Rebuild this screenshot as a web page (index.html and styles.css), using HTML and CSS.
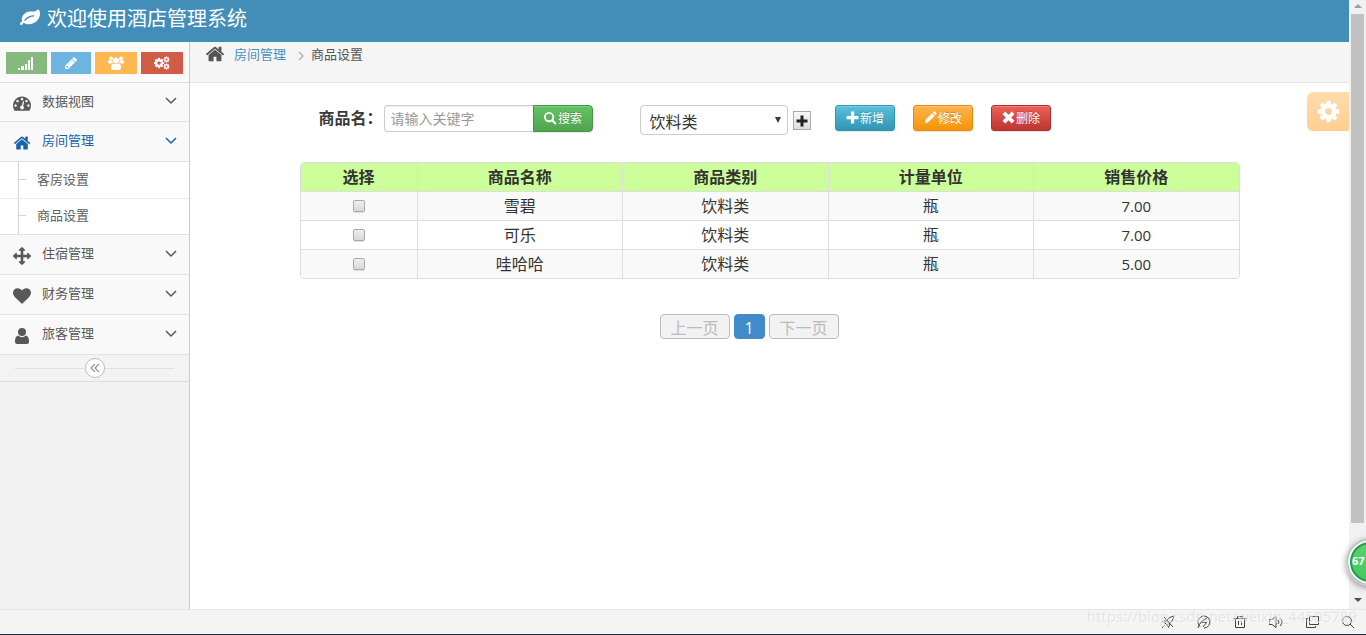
FILE: index.html
```html
<!DOCTYPE html>
<html lang="zh-CN">
<head>
<meta charset="utf-8">
<title>酒店管理系统</title>
<link rel="stylesheet" href="styles.css">
</head>
<body>
<svg class="sprite" aria-hidden="true">
  <symbol id="home" viewBox="0 0 1792 1792"><path d="M1472 992v480q0 26-19 45t-45 19h-384v-384h-256v384h-384q-26 0-45-19t-19-45v-480q0-1 .5-3t.5-3l575-474 575 474q1 2 1 6zm223-69l-62 74q-8 9-21 11h-3q-13 0-21-7l-692-577-692 577q-12 8-24 7-13-2-21-11l-62-74q-8-10-7-23.5t11-21.5l719-599q32-26 76-26t76 26l244 204v-195q0-14 9-23t23-9h192q14 0 23 9t9 23v408l219 182q10 8 11 21.5t-7 23.5z"/></symbol>
  <symbol id="user" viewBox="0 0 18 18"><circle cx="9" cy="5" r="4"/><path d="M5 8.500Q9 12 13 8.500Q16 9.500 16 14V15Q16 17 14 17H4Q2 17 2 15V14Q2 9.500 5 8.500Z"/></symbol>
  <symbol id="heart" viewBox="0 0 1792 1792"><path d="M896 1664q-26 0-44-18l-624-602q-10-8-27.500-26t-55.500-65.500-68-97.500-53.500-121-23.500-138q0-220 127-344t351-124q62 0 126.500 21.500t120 58 95.500 68.500 76 68q36-36 76-68t95.500-68.500 120-58 126.500-21.500q224 0 351 124t127 344q0 221-229 450l-623 600q-18 18-44 18z"/></symbol>
  <symbol id="arrows" viewBox="0 0 1792 1792"><path d="M1792 896q0 26-19 45l-256 256q-19 19-45 19t-45-19-19-45v-128h-384v384h128q26 0 45 19t19 45-19 45l-256 256q-19 19-45 19t-45-19l-256-256q-19-19-19-45t19-45 45-19h128v-384h-384v128q0 26-19 45t-45 19-45-19l-256-256q-19-19-19-45t19-45l256-256q19-19 45-19t45 19 19 45v128h384v-384h-128q-26 0-45-19t-19-45 19-45l256-256q19-19 45-19t45 19l256 256q19 19 19 45t-19 45-45 19h-128v384h384v-128q0-26 19-45t45-19 45 19l256 256q19 19 19 45z"/></symbol>
  <symbol id="gauge" viewBox="0 0 1792 1792"><path d="M384 1152q0-53-37.500-90.500t-90.500-37.500-90.500 37.500-37.500 90.500 37.500 90.500 90.500 37.500 90.500-37.500 37.500-90.500zm192-448q0-53-37.500-90.500t-90.500-37.500-90.500 37.500-37.500 90.500 37.500 90.500 90.500 37.500 90.500-37.500 37.500-90.500zm428 481l101-382q6-26-7.500-48.500t-38.500-29.500-48 6.500-30 39.500l-101 382q-60 5-107 43.500t-63 98.500q-20 77 20 146t117 89 146-20 89-117q16-60-6-117t-72-91zm660-33q0-53-37.500-90.500t-90.500-37.500-90.500 37.500-37.500 90.500 37.500 90.500 90.500 37.500 90.500-37.500 37.500-90.500zm-640-640q0-53-37.500-90.500t-90.500-37.500-90.500 37.500-37.500 90.500 37.500 90.500 90.500 37.500 90.500-37.500 37.500-90.500zm448 192q0-53-37.500-90.500t-90.500-37.500-90.500 37.500-37.500 90.500 37.500 90.500 90.500 37.500 90.500-37.500 37.500-90.500zm320 448q0 261-141 483-19 29-54 29h-1402q-35 0-54-29-141-221-141-483 0-182 71-348t191-286 286-191 348-71 348 71 286 191 191 286 71 348z"/></symbol>
  <symbol id="cog" viewBox="0 0 1792 1792"><path d="M1152 896q0-106-75-181t-181-75-181 75-75 181 75 181 181 75 181-75 75-181zm512-109v222q0 12-8 23t-20 13l-185 28q-19 54-39 91 35 50 107 138 10 12 10 25t-9 23q-27 37-99 108t-94 71q-12 0-26-9l-138-108q-44 23-91 38-16 136-29 186-7 28-36 28h-222q-14 0-24.500-8.500t-11.500-21.500l-28-184q-49-16-90-37l-141 107q-10 9-25 9-14 0-25-11-126-114-165-168-7-10-7-23 0-12 8-23 15-21 51-66.500t54-70.500q-27-50-41-99l-183-27q-13-2-21-12.500t-8-23.500v-222q0-12 8-23t19-13l186-28q14-46 39-92-40-57-107-138-10-12-10-24 0-10 9-23 26-36 98.500-107.500t94.500-71.500q13 0 26 10l138 107q44-23 91-38 16-136 29-186 7-28 36-28h222q14 0 24.500 8.500t11.500 21.500l28 184q49 16 90 37l142-107q9-9 24-9 13 0 25 10 129 119 165 170 7 8 7 22 0 12-8 23-15 21-51 66.500t-54 70.500q26 50 41 98l183 28q13 2 21 12.500t8 23.500z"/></symbol>
  <symbol id="pencil" viewBox="0 0 1792 1792"><path d="M491 1536l91-91-235-235-91 91v107h128v128h107zm523-928q0-22-22-22-10 0-17 7l-542 542q-7 7-7 17 0 22 22 22 10 0 17-7l542-542q7-7 7-17zm-54-192l416 416-832 832h-416v-416zm683 96q0 53-37 90l-166 166-416-416 166-165q36-38 90-38 53 0 91 38l235 234q37 39 37 91z"/></symbol>
  <symbol id="leaf" viewBox="0 0 1792 1792"><path d="M1280 704q0-26-19-45t-45-19q-172 0-318 49.500t-259.500 134-235.500 219.500q-19 21-19 45 0 26 19 45t45 19q24 0 45-19 27-24 74-71t67-66q137-124 268.500-176t313.500-52q26 0 45-19t19-45zm512-198q0 95-20 193-46 224-184.500 383t-357.500 268q-214 108-438 108-148 0-286-47-15-5-88-42t-96-37q-16 0-39.500 32t-45 70-52.500 70-60 32q-43 0-63.500-17.500t-45.500-59.500q-2-4-6-11t-5.500-10-3-9.500-1.500-13.500q0-35 31-73.500t68-65.500 68-56 31-48q0-4-14-38t-16-44q-9-51-9-104 0-115 43.500-220t119-184.500 170.500-139 204-95.500q55-18 145-25.500t179.500-9 178.500-6 163.500-24 113.500-56.500l29.500-29.500 29.500-28 27-20 36.500-16 43.500-4.500q39 0 70.500 46t47.500 112 24 124 8 96z"/></symbol>
  <symbol id="signal" viewBox="0 0 16 14"><path d="M0 12h2v2H0zM3 10h3v4H3zM7 8h2v6H7zM10 4h2v10h-2zM13 1h2v13h-2z"/></symbol>
  <symbol id="group" viewBox="0 0 16 14"><circle cx="3" cy="2.500" r="2"/><circle cx="13" cy="2.500" r="2"/><circle cx="8" cy="4.500" r="2.900"/><path d="M0 5.500Q0 4 1.500 4.200Q3 5.300 4.500 4.300L4.600 6.500Q3.500 7 3.200 7.500H1.200Q0 7.500 0 6.200zM16 5.500Q16 4 14.500 4.200Q13 5.300 11.500 4.300L11.400 6.500Q12.500 7 12.800 7.500h2Q16 7.500 16 6.200zM5.200 7.200Q8 9 10.800 7.200Q13 8 13 11.500Q13 14 11 14H5Q3 14 3 11.500Q3 8 5.200 7.200z"/></symbol>
  <symbol id="search" viewBox="0 0 14 14"><path d="M5.500 0a5.500 5.500 0 0 1 4.600 8.500L13.600 12 12 13.600 8.500 10.100A5.500 5.500 0 1 1 5.500 0zm0 2a3.500 3.500 0 1 0 0 7 3.500 3.500 0 0 0 0-7z"/></symbol>
  <symbol id="plus" viewBox="0 0 12 12"><path d="M4.500.500h3v4h4v3h-4v4h-3v-4h-4v-3h4z"/></symbol>
  <symbol id="cross" viewBox="0 0 12 12"><path d="M3 .500L6 3.500 9 .500 11.500 3 8.500 6l3 3L9 11.500l-3-3-3 3L.500 9l3-3-3-3z"/></symbol>
  <symbol id="pen" viewBox="0 0 14 14"><path d="M10.500.600Q11 .200 11.500.600L13.300 2.400Q13.800 3 13.300 3.500L12.200 4.600 9.400 1.800zM8.700 2.500l2.800 2.800L4.300 12.300.500 13.500 1.700 9.500z"/></symbol>
  <symbol id="down" viewBox="0 0 12 8"><path d="M1 1l5 5 5-5" fill="none" stroke="currentColor" stroke-width="1.500"/></symbol>
</svg>

<div class="viewport">
  <div class="app">
    <header class="navbar"><svg class="icon icon-xl"><use href="#leaf"/></svg><h1>欢迎使用酒店管理系统</h1></header>
    <div class="body">
      <aside class="sidebar">
        <div class="shortcuts">
          <button class="sc green" aria-label="统计"><svg class="icon-md"><use href="#signal"/></svg></button>
          <button class="sc blue" aria-label="编辑"><svg class="icon-md"><use href="#pencil"/></svg></button>
          <button class="sc orange" aria-label="用户"><svg class="icon-md"><use href="#group"/></svg></button>
          <button class="sc red" aria-label="设置"><svg class="icon-md" viewBox="0 0 16 14"><use href="#cog" x="-1" y="1" width="12" height="12"/><use href="#cog" x="9" y="0" width="7" height="7"/><use href="#cog" x="9" y="7" width="7" height="7"/></svg></button>
        </div>
        <ul class="nav">
          <li><a href="#"><svg class="icon"><use href="#gauge"/></svg><span>数据视图</span><svg class="chev"><use href="#down"/></svg></a></li>
          <li class="open"><a href="#"><svg class="icon"><use href="#home"/></svg><span>房间管理</span><svg class="chev"><use href="#down"/></svg></a>
            <ul class="sub"><li><a href="#">客房设置</a></li><li><a href="#">商品设置</a></li></ul>
          </li>
          <li><a href="#"><svg class="icon"><use href="#arrows"/></svg><span>住宿管理</span><svg class="chev"><use href="#down"/></svg></a></li>
          <li><a href="#"><svg class="icon"><use href="#heart"/></svg><span>财务管理</span><svg class="chev"><use href="#down"/></svg></a></li>
          <li><a href="#"><svg class="icon"><use href="#user"/></svg><span>旅客管理</span><svg class="chev"><use href="#down"/></svg></a></li>
        </ul>
        <div class="collapse"><button aria-label="收起菜单"><svg width="10" height="10" viewBox="0 0 10 10"><path d="M5 1L1 5l4 4M9 1L5 5l4 4" fill="none" stroke="#999" stroke-width="1.300"/></svg></button></div>
      </aside>
      <main class="main">
        <nav class="crumbs"><svg class="icon icon-xl"><use href="#home"/></svg><a href="#">房间管理</a><svg class="sep" viewBox="0 0 6 10"><path d="M1 1l4 4-4 4" fill="none" stroke="#b2b6bf" stroke-width="1.500"/></svg><span>商品设置</span></nav>
        <button class="settings" aria-label="页面设置"><svg><use href="#cog"/></svg></button>
        <div class="content">
          <form class="toolbar">
            <label for="kw">商品名：</label>
            <input id="kw" type="text" placeholder="请输入关键字">
            <button class="btn search" type="button"><svg><use href="#search"/></svg>搜索</button>
            <div class="pick"><select aria-label="商品类别"><option>饮料类</option></select><svg class="caret" viewBox="0 0 6 6"><path d="M0 0h6L3 6z"/></svg></div>
            <button class="add" type="button" aria-label="新增类别"><svg><use href="#plus"/></svg></button>
            <div class="actions">
              <button class="btn info" type="button"><svg><use href="#plus"/></svg>新增</button>
              <button class="btn warn" type="button"><svg><use href="#pen"/></svg>修改</button>
              <button class="btn danger" type="button"><svg><use href="#cross"/></svg>删除</button>
            </div>
          </form>
          <table class="grid">
            <thead><tr><th class="pickcol">选择</th><th>商品名称</th><th>商品类别</th><th>计量单位</th><th>销售价格</th></tr></thead>
            <tbody>
              <tr><td><input type="checkbox" aria-label="雪碧"></td><td>雪碧</td><td>饮料类</td><td>瓶</td><td class="num">7.00</td></tr>
              <tr><td><input type="checkbox" aria-label="可乐"></td><td>可乐</td><td>饮料类</td><td>瓶</td><td class="num">7.00</td></tr>
              <tr><td><input type="checkbox" aria-label="哇哈哈"></td><td>哇哈哈</td><td>饮料类</td><td>瓶</td><td class="num">5.00</td></tr>
            </tbody>
          </table>
          <div class="pager"><button disabled>上一页</button><button class="current">1</button><button disabled>下一页</button></div>
        </div>
      </main>
    </div>
  </div>
  <div class="scroll"><svg viewBox="0 0 8 4"><path d="M0 4L4 0l4 4z" fill="#a0a0a0"/></svg><div class="track"><div class="thumb"></div></div><svg viewBox="0 0 8 4"><path d="M0 0h8L4 4z" fill="#505050"/></svg></div>
</div>
<footer class="status">
  <svg viewBox="0 0 14 14"><path d="M4 8Q7 2 13 1 12 7 6 10L4 8M5 5L1.500 6.500 4 8M9 9L7.500 12.500 6 10M1 13l3-3M3 2l9 10"/></svg>
  <svg viewBox="0 0 14 14"><path d="M3 11.500A6 6 0 1 1 7 13M1 13Q3 6 10 3M8 4L5.500 7.500h4L6 12"/></svg>
  <svg viewBox="0 0 14 14"><path d="M.500 3.500h13M4.500 3V1.500h5V3M2.500 3.500v9h9v-9M5.500 6v4M8.500 6v4"/></svg>
  <svg viewBox="0 0 14 14"><path d="M0 4.500h3l4-3v11l-4-3H0zM9 5q2 2 0 4M11 3q4 4 0 8"/></svg>
  <svg viewBox="0 0 14 14"><path d="M4.500 1.500h9v8h-9zM3 3.500H1.500v9h9V11"/></svg>
  <svg viewBox="0 0 14 14"><circle cx="6" cy="6" r="4.500"/><path d="M9 9l4 4"/></svg>
  <span class="watermark">https://blog.csdn.net/weixin_44505789</span>
</footer>
<div class="badge">67</div>
</body>
</html>
```

FILE: styles.css
```css
* { box-sizing: border-box; }
body {
  margin: 0;
  height: 100vh;
  display: flex;
  flex-direction: column;
  position: relative;
  overflow: hidden;
  font-family: "Open Sans", "Noto Sans CJK SC", sans-serif;
  font-size: 13px;
  line-height: 20px;
  color: #393939;
  background: #fff;
}
a { text-decoration: none; color: inherit; }
ul { list-style: none; margin: 0; padding: 0; }
button, input, select { font: inherit; margin: 0; }
button { padding: 0; }
svg { fill: currentColor; flex: none; }
.sprite { position: absolute; width: 0; height: 0; }
.icon { width: 18px; height: 18px; }
.icon-xl { width: 20px; height: 20px; }
.icon-md { width: 16px; height: 14px; }

.viewport { flex: 1; display: flex; min-height: 0; }
.app { flex: 1; display: flex; flex-direction: column; min-width: 0; }
.navbar {
  height: 42px;
  display: flex;
  align-items: flex-start;
  gap: 7px;
  padding: 8px 20px;
  background: #438eb9;
  color: #fff;
}
.navbar h1 { margin: 0; font-size: 20px; font-weight: 400; line-height: 22px; }
.body { flex: 1; display: flex; min-height: 0; }

.sidebar { width: 190px; flex: none; background: #f2f2f2; border-right: 1px solid #ccc; }
.shortcuts {
  height: 41px;
  display: grid;
  grid-template-columns: 41fr 40fr 43fr 42fr;
  align-items: center;
  gap: 4px;
  padding: 2px 6px 0;
  background: #fafafa;
  border-bottom: 1px solid #ddd;
}
.sc { height: 22px; border: 0; color: #fff; display: flex; align-items: center; justify-content: center; }
.green { background: #87b87f; }
.blue { background: #6fb3e0; }
.orange { background: #ffb752; }
.red { background: #d15b47; }

.nav > li { border-bottom: 1px solid #e2e2e2; }
.nav > li > a {
  height: 39px;
  display: flex;
  align-items: center;
  gap: 11px;
  padding: 0 12px 0 13px;
  background: #f9f9f9;
  color: #585858;
}
.nav > li:first-child > a { height: 38px; }
.nav > li > a span { flex: 1; padding-bottom: 3px; }
.nav .icon { margin-top: 2px; }
.chev { width: 12px; height: 8px; margin-bottom: 2px; }
.nav > .open > a { color: #1963aa; }
.sub { background: #fff; border-top: 1px solid #e2e2e2; padding-left: 18px; }
.sub li { position: relative; border-left: 1px solid #ccd6e0; }
.sub a { display: block; height: 36px; line-height: 35px; padding-left: 18px; color: #616161; }
.sub li + li::after { content: ""; position: absolute; left: -19px; right: 0; top: 0; border-top: 1px dotted #ddd; }
.sub li::before { content: ""; position: absolute; left: 0; top: 17px; width: 7px; border-top: 1px solid #ccd6e0; }

.collapse {
  height: 27px;
  display: flex;
  align-items: center;
  padding: 0 15px;
  background: #f3f3f3;
  border-bottom: 1px solid #ddd;
}
.collapse::before, .collapse::after { content: ""; flex: 1; border-top: 1px solid #e0e0e0; }
.collapse button {
  width: 20px;
  height: 20px;
  border: 1px solid #bbb;
  border-radius: 50%;
  background: #fff;
  display: flex;
  align-items: center;
  justify-content: center;
}

.main { flex: 1; min-width: 0; position: relative; background: #fff; }
.crumbs {
  height: 41px;
  display: flex;
  align-items: flex-start;
  padding: 2px 15px;
  background: #f5f5f5;
  border-bottom: 1px solid #e5e5e5;
  color: #555;
}
.crumbs a { color: #4c8fbd; margin-left: 9px; }
.crumbs .sep { width: 6px; height: 10px; margin: 7px 7px 0 12px; }
.settings {
  position: absolute;
  top: 50px;
  right: 0;
  width: 42px;
  height: 39px;
  border: 0;
  border-radius: 6px 0 0 6px;
  background: linear-gradient(#ffdcae, #ffcf8f);
  color: #fff;
  display: flex;
  align-items: center;
  justify-content: center;
}
.settings svg { width: 25px; height: 25px; }

.content { max-width: 940px; margin: 0 auto; padding-top: 22px; font-size: 16px; }
.toolbar { display: flex; align-items: flex-start; height: 57px; padding-left: 19px; }
.toolbar label { font-weight: 700; line-height: 26px; width: 65px; white-space: nowrap; }
#kw {
  width: 149px;
  height: 27px;
  padding: 0 6px;
  border: 1px solid #ccc;
  border-right: 0;
  border-radius: 4px 0 0 4px;
  font-size: 14px;
  line-height: 20px;
  box-shadow: inset 0 1px 1px #eee;
  outline: 0;
}
#kw::placeholder { color: #999; }
.btn {
  width: 60px;
  height: 26px;
  padding: 1px 0 0 1px;
  border: 1px solid;
  border-radius: 3px;
  color: #fff;
  font-size: 12px;
  text-shadow: 0 -1px 0 rgba(0, 0, 0, .2);
  box-shadow: inset 0 1px 0 rgba(255, 255, 255, .2), 0 1px 1px rgba(0, 0, 0, .1);
  display: flex;
  align-items: center;
  justify-content: center;
  gap: 1px;
}
.btn svg { width: 13px; height: 13px; margin-bottom: 2px; }
.search { height: 27px; border-radius: 0 4px 4px 0; border-color: #419641; background: linear-gradient(#62c462, #51a351); }
.info { border-color: #2f96b4; background: linear-gradient(#5bc0de, #2f96b4); }
.warn { border-color: #e68a0a; background: linear-gradient(#fbb450, #f89406); }
.danger { border-color: #b52f2a; background: linear-gradient(#ee5f5b, #bd362f); }
.pick { position: relative; margin-left: 47px; width: 148px; }
.pick select {
  appearance: none;
  width: 100%;
  height: 30px;
  padding: 3px 9px 0;
  border: 1px solid #ccc;
  border-radius: 4px;
  background: #fff;
  color: #333;
}
.caret { position: absolute; right: 7px; top: 12px; width: 6px; height: 6px; pointer-events: none; }
.add {
  width: 18px;
  height: 19px;
  margin: 6px 0 0 5px;
  border: 1px solid #aaa;
  background: linear-gradient(#f8f8f8, #ddd);
  display: flex;
  align-items: center;
  justify-content: center;
  color: #222;
}
.add svg { width: 12px; height: 12px; }
.actions { display: flex; gap: 18px; margin-left: 24px; }

.grid {
  width: 100%;
  table-layout: fixed;
  border-collapse: separate;
  border-spacing: 0;
  border: 1px solid #ddd;
  border-radius: 4px;
  overflow: hidden;
  text-align: center;
  color: #333;
}
.grid th, .grid td { height: 29px; padding: 0; line-height: 28px; border-bottom: 1px solid #ddd; }
.grid th + th, .grid td + td { border-left: 1px solid #ddd; }
.grid tbody tr:last-child td { height: 28px; border-bottom: 0; }
.grid th { background: #cf9; font-weight: 700; }
.grid .pickcol { width: 116px; }
.grid tbody tr:nth-child(odd) { background: #f9f9f9; }
.grid .num { font-size: 15px; }
.grid input {
  appearance: none;
  display: block;
  width: 12px;
  height: 12px;
  margin: 0 auto;
  border: 1px solid #aaa;
  border-radius: 2px;
  background: linear-gradient(#eee, #d8d8d8);
  box-shadow: 0 1px 1px #ddd;
}

.pager { display: flex; gap: 4px; margin: 35px 0 0 360px; }
.pager button {
  width: 70px;
  height: 25px;
  padding-top: 2px;
  border: 1px solid #bbb;
  border-radius: 4px;
  background: #f2f2f2;
  color: #bbb;
}
.pager .current { width: 31px; border-color: #428bca; background: #428bca; color: #fff; }

.scroll { width: 17px; background: #f1f1f1; display: flex; flex-direction: column; align-items: center; padding: 4px 0 7px; gap: 6px; }
.scroll svg { width: 8px; height: 4px; }
.track { flex: 1; width: 13px; }
.thumb { height: 88%; background: #c1c1c1; }

.status {
  height: 26px;
  display: flex;
  align-items: center;
  justify-content: flex-end;
  gap: 22px;
  padding-right: 11px;
  position: relative;
  background: #f4f4f4;
  border-top: 1px solid #e5e5e5;
  border-bottom: 1px solid #22303c;
}
.status svg { width: 14px; height: 14px; fill: none; stroke: #444; }
.watermark { position: absolute; right: 9px; top: -4px; font-size: 15px; line-height: 20px; color: rgba(215, 215, 215, .6); text-shadow: 1px 1px 0 rgba(255, 255, 255, .6); }
.badge {
  position: absolute;
  right: -28px;
  bottom: 49px;
  width: 48px;
  height: 48px;
  padding-left: 4px;
  border: 2px solid #c8c8c8;
  border-radius: 50%;
  background: linear-gradient(#5fd070, #3fca5c);
  box-shadow: inset 0 0 0 2px #fff, inset 0 0 0 4px #239a50, 0 2px 6px rgba(0, 0, 0, .4);
  color: #fff;
  font-size: 11px;
  font-weight: 700;
  line-height: 42px;
}
```
